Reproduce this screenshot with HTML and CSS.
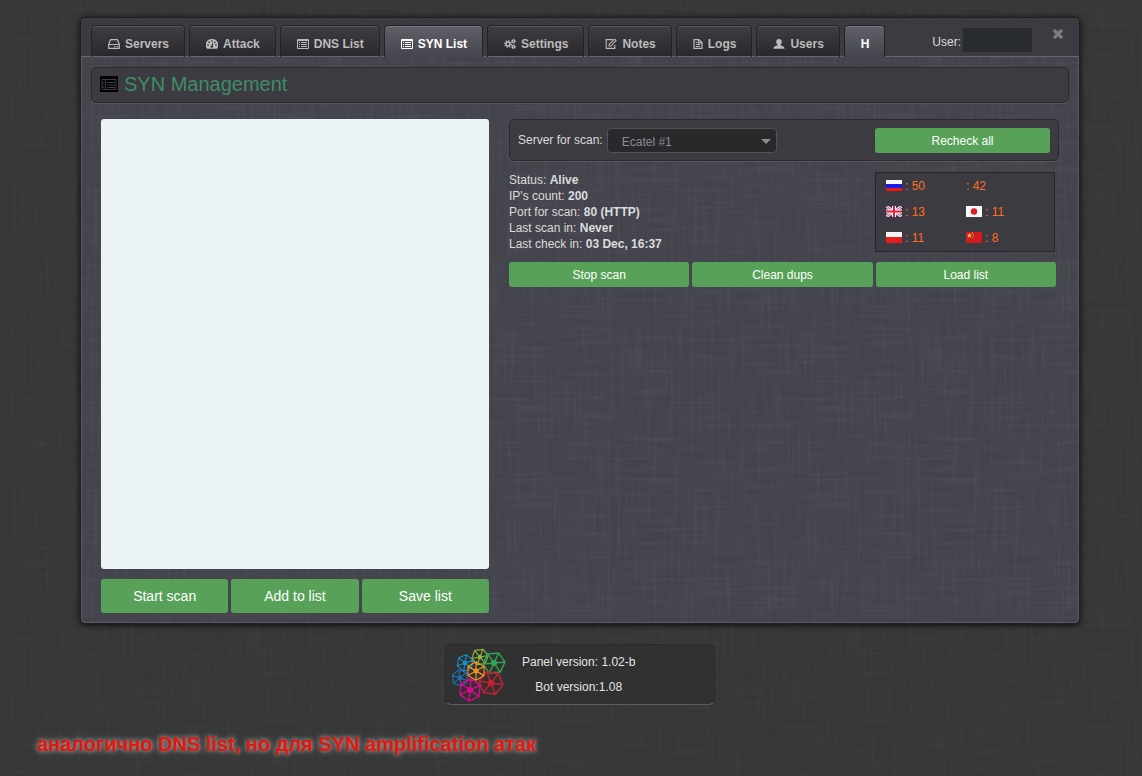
FILE: index.html
```html
<!DOCTYPE html>
<html lang="en">
<head>
<meta charset="utf-8">
<title>SYN Management</title>
<link rel="stylesheet" href="styles.css">
</head>
<body>
<svg class="defs" aria-hidden="true">
  <symbol id="i-list" viewBox="0 0 12 12"><path fill="none" stroke="currentColor" d="M.5 1.5h11v9H.5z"/><path fill="currentColor" d="M1 1h10v2H1zM2 4h1v1H2zM4 4h6v1H4zM2 6h1v1H2zM4 6h6v1H4zM2 8h1v1H2zM4 8h6v1H4z"/></symbol>
  <symbol id="i-hex" viewBox="-10 -10 20 20"><path fill="none" stroke="currentColor" stroke-width="1.200" stroke-linejoin="round" d="M9.200 0 4.600 8-4.600 8-9.200 0-4.600-8 4.600-8ZM9.200 0H-9.200M4.600 8-4.600-8M-4.600 8 4.600-8"/><circle r="2.600" fill="currentColor"/></symbol>
</svg>

<main class="page">
  <section class="panel">
    <header class="topbar">
      <nav class="tabs">
        <a class="tab" href="#servers"><svg class="icon" viewBox="0 0 12 12"><path fill="none" stroke="currentColor" stroke-width="1.200" stroke-linejoin="round" d="M.7 6.500 2.500 1.700h7l1.800 4.800v3.800H.7zM.7 6.500h10.600"/><path fill="currentColor" d="M6 8h1.300v1.200H6zM8.500 8h1.300v1.200H8.500z"/></svg>Servers</a>
        <a class="tab" href="#attack"><svg class="icon" viewBox="0 0 12 12"><path fill="currentColor" fill-rule="evenodd" d="M6 1a6 6 0 0 1 5 9.700H1A6 6 0 0 1 6 1zM5.300 2.200v1.500h1.400V2.200zM2.400 3.600v1.500h1.500V3.600zM8.200 3.700v1.400h1.500V3.700zM1.300 6.300v1.500h1.500V6.300zM9.200 6.300v1.500h1.500V6.300zM6.400 4.800 5.600 7.400a1.200 1.200 0 1 0 1 .3l.8-2.600z"/></svg>Attack</a>
        <a class="tab" href="#dns"><svg class="icon"><use href="#i-list"/></svg>DNS List</a>
        <a class="tab active" href="#syn" aria-current="page"><svg class="icon"><use href="#i-list"/></svg>SYN List</a>
        <a class="tab" href="#settings"><svg class="icon" viewBox="0 0 12 12"><g fill="none" stroke="currentColor"><circle cx="4" cy="6" r="2" stroke-width="1.600"/><circle cx="4" cy="6" r="3.300" stroke-width="1.200" stroke-dasharray="1.300 1.290"/><circle cx="9.500" cy="3.200" r="1.200" stroke-width="1.200"/><circle cx="9.500" cy="3.200" r="2" stroke-dasharray=".8 .77"/><circle cx="9.500" cy="8.800" r="1.200" stroke-width="1.200"/><circle cx="9.500" cy="8.800" r="2" stroke-dasharray=".8 .77"/></g></svg>Settings</a>
        <a class="tab" href="#notes"><svg class="icon" viewBox="0 0 12 12"><path fill="none" stroke="currentColor" stroke-width="1.100" d="M8 1.600H1.200v8.800h8.600V7"/><path fill="none" stroke="currentColor" stroke-width="1.100" d="M4.200 8V6.200L9.700 1.200l1.300 1.300L6 8z"/></svg>Notes</a>
        <a class="tab" href="#logs"><svg class="icon narrow" viewBox="0 0 10 12"><path fill="none" stroke="currentColor" stroke-width="1.200" d="M1 1.600h4.800L9 4.600v5.800H1zM5.500 1.500v3.300H9M2.800 6.500h4.400M2.800 8.500h4.400M2.800 4.500h1.500"/></svg>Logs</a>
        <a class="tab" href="#users"><svg class="icon" viewBox="0 0 12 12"><path fill="currentColor" d="M6 1c1.800 0 2.800 1.200 2.800 2.700S8 6.300 7.400 6.800v.4c1.700.5 4.100.9 4.100 3.500H.5c0-2.600 2.400-3 4.100-3.500v-.4c-.6-.5-1.400-1.600-1.400-3.100S4.200 1 6 1z"/></svg>Users</a>
        <a class="tab active" href="#h">H</a>
      </nav>
      <div class="user"><span class="user-label">User:</span><span class="user-name"></span></div>
      <button class="close" type="button" aria-label="Close"><svg viewBox="0 0 12 12"><path fill="none" stroke="currentColor" stroke-width="3.200" d="m2 2 8 8M10 2l-8 8"/></svg></button>
    </header>

    <div class="content">
      <h1 class="title box"><svg class="title-icon" viewBox="0 0 18 16"><path d="M0 0h18v16H0z"/><path fill="none" stroke="#3d3a40" d="M2 3.500h14v10H2zM5.500 3.500v10M2.500 6.500h2M7 6.500h8M2.500 9h2M7 9h8M2.500 11.500h2M7 11.500h8"/></svg>SYN Management</h1>

      <div class="columns">
        <div class="left">
          <textarea class="ip-list" aria-label="IP list"></textarea>
          <div class="row">
            <button class="btn large" type="button">Start scan</button>
            <button class="btn large" type="button">Add to list</button>
            <button class="btn large" type="button">Save list</button>
          </div>
        </div>

        <div class="right">
          <div class="server box">
            <label for="server">Server for scan:</label>
            <div class="select">
              <select id="server"><option>Ecatel #1</option></select>
            </div>
            <button class="btn recheck" type="button">Recheck all</button>
          </div>

          <div class="info">
            <div class="status">
              <div>Status: <b>Alive</b></div>
              <div>IP's count: <b>200</b></div>
              <div>Port for scan: <b>80 (HTTP)</b></div>
              <div>Last scan in: <b>Never</b></div>
              <div>Last check in: <b>03 Dec, 16:37</b></div>
            </div>
            <ul class="countries">
              <li><svg class="flag" viewBox="0 0 16 11"><path fill="#f6f6f6" d="M0 0h16v4H0z"/><path fill="#1c1ce0" d="M0 4h16v4H0z"/><path fill="#e81818" d="M0 8h16v3H0z"/></svg>: 50</li>
              <li>: 42</li>
              <li><svg class="flag" viewBox="0 0 16 11"><path fill="#24348c" d="M0 0h16v11H0z"/><path stroke="#f0e8f0" stroke-width="3" d="m0 0 16 11M16 0 0 11"/><path stroke="#d84058" d="m0 0 16 11M16 0 0 11"/><path stroke="#fff" stroke-width="4" d="M8 0v11M0 5.500h16"/><path stroke="#dc2038" stroke-width="2" d="M8 0v11M0 5.500h16"/></svg>: 13</li>
              <li><svg class="flag" viewBox="0 0 16 11"><path fill="#f8f8f4" d="M0 0h16v11H0z"/><circle cx="8" cy="5.500" r="3.200" fill="#e01c24"/></svg>: 11</li>
              <li><svg class="flag" viewBox="0 0 16 11"><path fill="#f6f4f2" d="M0 0h16v6H0z"/><path fill="#e81c1c" d="M0 5h16v6H0z"/></svg>: 11</li>
              <li><svg class="flag" viewBox="0 0 16 11"><path fill="#d01c1c" d="M0 0h16v11H0z"/><path fill="#f4c860" d="m3.500 1 .7 1.600H6L4.700 3.800l.5 1.900-1.700-1-1.700 1 .5-1.900L1 2.600h1.800zM6 .5h1v1H6zM7 2.500h1v1H7zM6 5h1v1H6z"/></svg>: 8</li>
            </ul>
          </div>

          <div class="row actions">
            <button class="btn" type="button">Stop scan</button>
            <button class="btn" type="button">Clean dups</button>
            <button class="btn" type="button">Load list</button>
          </div>
        </div>
      </div>
    </div>
  </section>

  <footer class="version">
    <svg class="logo" viewBox="0 0 54 54" aria-hidden="true">
      <use href="#i-hex" x="-9" y="-9" width="18" height="18" color="#1590cc" transform="translate(13 15) rotate(-20)"/>
      <use href="#i-hex" x="-9" y="-9" width="18" height="18" color="#1f6fba" transform="translate(8 30) rotate(-40)"/>
      <use href="#i-hex" x="-9" y="-9" width="18" height="18" color="#8fb93e" transform="translate(28 9) rotate(-10)"/>
      <use href="#i-hex" x="-12" y="-12" width="24" height="24" color="#2fa350" transform="translate(42 15) rotate(-5)"/>
      <use href="#i-hex" x="-13" y="-13" width="26" height="26" color="#bf2030" transform="translate(39 35) rotate(8)"/>
      <use href="#i-hex" x="-12" y="-12" width="24" height="24" color="#d8098c" transform="translate(18 42) rotate(-25)"/>
      <use href="#i-hex" x="-10" y="-10" width="20" height="20" color="#ee9322" transform="translate(24 23) rotate(-30)"/>
    </svg>
    <div class="version-text">
      <div>Panel version: 1.02-b</div>
      <div>Bot version:1.08</div>
    </div>
  </footer>
</main>

<p class="caption">аналогично DNS list, но для SYN amplification атак</p>
</body>
</html>
```

FILE: styles.css
```css
* { box-sizing: border-box; }

:root {
  --linen:
    url("data:image/svg+xml,%3Csvg xmlns='http://www.w3.org/2000/svg' width='300' height='300'%3E%3Cfilter id='f' x='0' y='0' width='100%25' height='100%25'%3E%3CfeTurbulence type='fractalNoise' baseFrequency='.3 .015' numOctaves='2' seed='4' stitchTiles='stitch'/%3E%3CfeColorMatrix values='0 0 0 0 1 0 0 0 0 1 0 0 0 0 1 .4 0 0 0 -.19'/%3E%3C/filter%3E%3Crect width='300' height='300' filter='url(%23f)'/%3E%3C/svg%3E"),
    url("data:image/svg+xml,%3Csvg xmlns='http://www.w3.org/2000/svg' width='300' height='300'%3E%3Cfilter id='f' x='0' y='0' width='100%25' height='100%25'%3E%3CfeTurbulence type='fractalNoise' baseFrequency='.015 .3' numOctaves='2' seed='9' stitchTiles='stitch'/%3E%3CfeColorMatrix values='0 0 0 0 1 0 0 0 0 1 0 0 0 0 1 .4 0 0 0 -.19'/%3E%3C/filter%3E%3Crect width='300' height='300' filter='url(%23f)'/%3E%3C/svg%3E");
}

body {
  margin: 0;
  background: linear-gradient(#373737e0, #373737e0), var(--linen), #373737;
  color: #dcdcdc;
  font: 12px/16px "Liberation Sans", Arial, sans-serif;
}

.defs { position: absolute; width: 0; height: 0; }
svg { flex: none; display: block; }

.page { padding: 17px 62px 0 80px; }

.panel {
  border: 1px solid #1f1f22;
  border-radius: 5px;
  background: linear-gradient(#44444dc8, #44444dc8), var(--linen), #42424b;
  box-shadow: 0 1px 6px #000c, inset 0 0 0 1px #5a5a62;
}

.topbar {
  display: flex;
  align-items: flex-start;
  padding: 7px 14px 0 10px;
  border-bottom: 1px solid #66666c;
  border-radius: 4px 4px 0 0;
  background: #3c3b41;
}

.tabs { display: flex; gap: 4px; margin-bottom: -1px; }

.tab {
  display: flex;
  align-items: center;
  gap: 5px;
  height: 32px;
  padding: 4px 15px 0 16px;
  border: 1px solid #232327;
  border-bottom: 0;
  border-radius: 4px 4px 0 0;
  box-shadow: inset 0 1px #58575d;
  background: linear-gradient(#3e3d43, #29292d) no-repeat 0 0 / 100% 30px, #66666c;
  color: #bcbcbc;
  font-weight: bold;
  text-decoration: none;
  white-space: nowrap;
}

.tab.active {
  background: linear-gradient(#606068, #45454f);
  box-shadow: inset 0 1px #77777d;
  color: #fff;
}

.icon { width: 12px; height: 12px; }
.icon.narrow { width: 10px; }

.user {
  display: flex;
  align-items: center;
  gap: 2px;
  margin: 3px 19px 0 auto;
}

.user-label { padding-top: 4px; }
.user-name { width: 69px; height: 24px; background: #282c2e; }

.close {
  width: 14px;
  padding: 3px 1px;
  border: 0;
  background: none;
  color: #7b7b80;
}

.content { padding: 10px; }

.box {
  border: 1px solid #2a2a2e;
  border-radius: 5px;
  background: #3c3b41;
  box-shadow: 0 1px #58585f;
}

.title {
  display: flex;
  align-items: center;
  gap: 6px;
  height: 36px;
  margin: 0 0 16px;
  padding: 0 8px 2px;
  color: #408c66;
  font-size: 20px;
  font-weight: normal;
}

.title-icon { width: 18px; height: 16px; }

.columns {
  display: grid;
  grid-template-columns: minmax(0, 388fr) minmax(0, 550fr);
  gap: 20px;
  padding: 0 10px;
}

.ip-list {
  display: block;
  width: 100%;
  height: 450px;
  margin-bottom: 10px;
  border: 0;
  border-radius: 3px;
  background: #ecf3f5;
  resize: none;
}

.row {
  display: grid;
  grid-template-columns: repeat(3, 1fr);
  gap: 3px;
}

.btn {
  height: 25px;
  padding: 0;
  border: 0;
  border-radius: 3px;
  background: #57a158;
  color: #fff;
  font: inherit;
}

.btn.large { height: 34px; font-size: 14px; }

.server {
  display: flex;
  align-items: flex-start;
  gap: 4px;
  height: 42px;
  padding: 8px;
}

.server label { line-height: 24px; }

.select { position: relative; width: 170px; }

.select select {
  width: 100%;
  height: 25px;
  padding: 3px 14px 0;
  appearance: none;
  border: 1px solid #515156;
  border-radius: 4px;
  background: #29292c;
  color: #8c8c90;
  font: inherit;
}

.select::after {
  content: "";
  position: absolute;
  top: 11px;
  right: 6px;
  border: 5px solid transparent;
  border-top-color: #8c8c90;
  border-bottom: 0;
  pointer-events: none;
}

.recheck { width: 175px; margin-left: auto; }

.info {
  display: flex;
  justify-content: space-between;
  margin: 11px 4px 10px 0;
}

.countries {
  display: grid;
  grid-template-columns: 80px 1fr;
  grid-auto-rows: 26px;
  width: 180px;
  height: 80px;
  margin: 0;
  padding: 0 10px;
  border: 1px solid #28282c;
  background: #3c3b41;
  color: #ff701e;
  list-style: none;
}

.countries li { display: flex; align-items: center; gap: 3px; }
.flag { width: 16px; height: 11px; margin-bottom: 2px; }

.actions { margin-right: 3px; }

.version {
  display: flex;
  align-items: center;
  width: 270px;
  height: 61px;
  margin: 20px auto 0;
  padding: 0 6px;
  border: 1px solid #2c2c2c;
  border-bottom-color: #5c5c5c;
  border-radius: 6px;
  background: #313131;
}

.logo { width: 54px; height: 54px; }

.version-text {
  padding-left: 16px;
  line-height: 25px;
  text-align: center;
  color: #e4e4e4;
}

.caption {
  margin: 27px 37px 20px;
  color: #e0180e;
  font-size: 20px;
  line-height: 24px;
  font-weight: bold;
  text-shadow: 0 0 4px #999, 0 0 7px #888;
}
```
